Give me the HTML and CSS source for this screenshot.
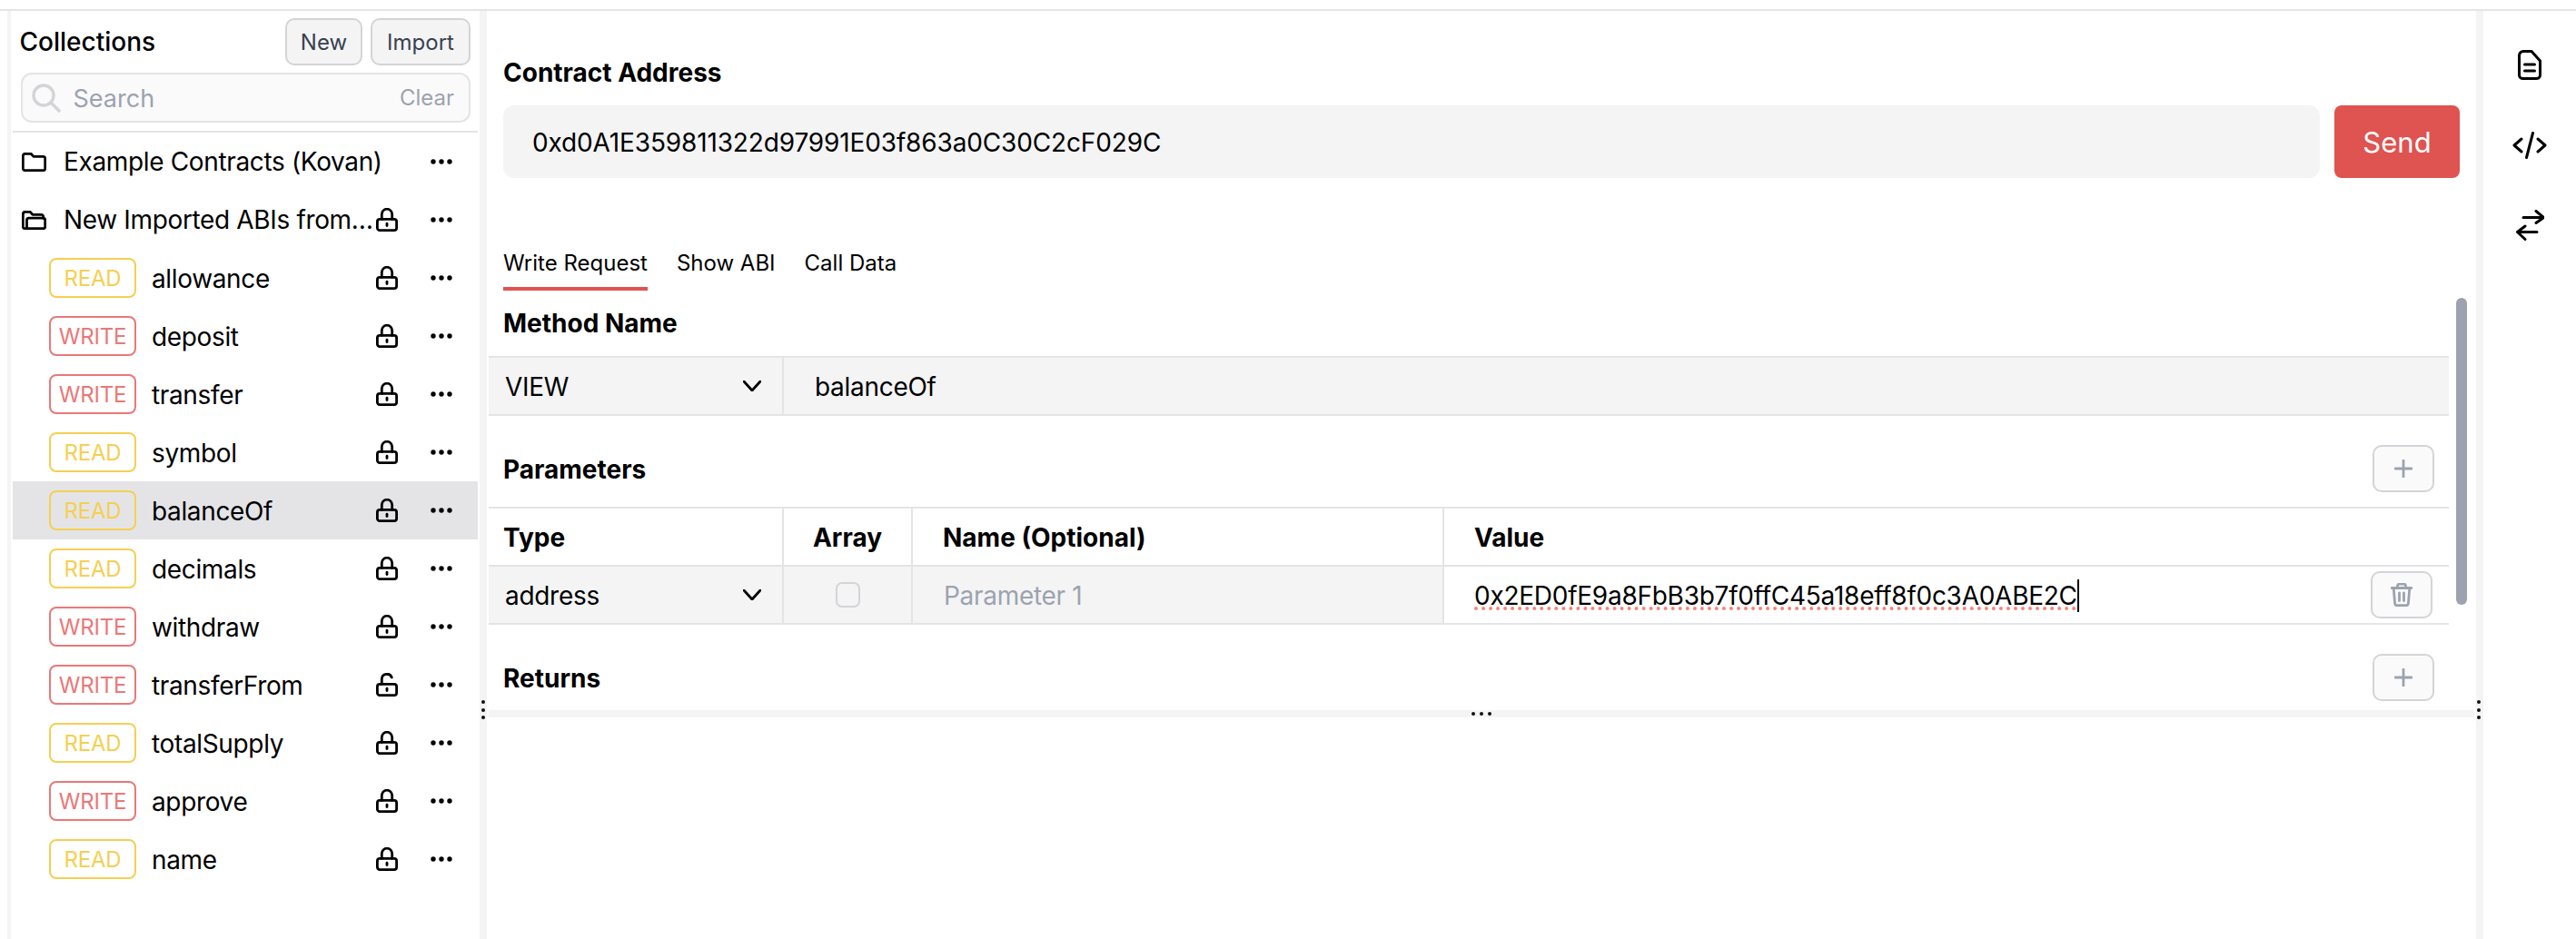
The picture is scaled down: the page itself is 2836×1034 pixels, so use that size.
FILE: index.html
```html
<!DOCTYPE html>
<html lang="en">
<head>
<meta charset="utf-8">
<title>Collections</title>
<link rel="stylesheet" href="styles.css">
</head>
<body>
<svg class="sprite" width="0" height="0" aria-hidden="true">
  <symbol id="lock" viewBox="0 0 24 26"><rect x="1.4" y="12.4" width="21.2" height="12.2" rx="2.6"/><path d="M6.3 12.4V6.9a5.700 5.700 0 0 1 11.400 0v5.500"/><path d="M12 17.200v2.400"/></symbol>
  <symbol id="unlock" viewBox="0 0 24 26"><rect x="1.4" y="12.4" width="21.2" height="12.2" rx="2.6"/><path d="M6.3 12.4V6.9a5.700 5.700 0 0 1 11 -2"/><path d="M12 17.200v2.400"/></symbol>
  <symbol id="more" viewBox="0 0 24 6"><circle class="solid" cx="3" cy="3" r="2.7"/><circle class="solid" cx="12" cy="3" r="2.7"/><circle class="solid" cx="21" cy="3" r="2.7"/></symbol>
  <symbol id="chev" viewBox="0 0 20 12"><path d="M1 1l9 10 9-10"/></symbol>
  <symbol id="plus" viewBox="0 0 20 20"><path d="M10 1v18M1 10h18"/></symbol>
</svg>
<div class="topline"></div>
<div class="shell">
  <div class="gutter-thin"></div>
  <aside class="sidebar">
    <div class="side-head">
      <h2 class="side-title">Collections</h2>
      <div class="side-actions">
        <button class="btn btn-new">New</button>
        <button class="btn btn-import">Import</button>
      </div>
    </div>
    <div class="search">
      <svg class="search-icon" viewBox="0 0 32 32"><circle cx="13" cy="13" r="11"/><path d="M21 21l9 9"/></svg>
      <span class="search-text">Search</span>
      <span class="search-clear">Clear</span>
    </div>
    <div class="tree">
      <div class="row">
        <svg class="folder" viewBox="0 0 27 21"><path d="M1.3 3.6a2.3 2.3 0 0 1 2.3-2.3h6.5l2.8 3h10.5a2.3 2.3 0 0 1 2.3 2.3v10.8a2.3 2.3 0 0 1-2.3 2.3H3.6a2.3 2.3 0 0 1-2.3-2.3z"/></svg>
        <span class="row-name">Example Contracts (Kovan)</span>
        <span class="lock-slot"></span>
        <svg class="more"><use href="#more"/></svg>
      </div>
      <div class="row">
        <svg class="folder" viewBox="0 0 27 21"><path d="M1.3 3.6a2.3 2.3 0 0 1 2.3-2.3h5.5l2.8 3h9.5a2.3 2.3 0 0 1 2.3 2.3v1.7"/><path d="M1.3 3.6v13.800a2.3 2.3 0 0 0 2.3 2.3h19.800a2.3 2.3 0 0 0 2.3-2.3v-7a2.3 2.3 0 0 0-2.3-2.3H7.800a2.3 2.3 0 0 0-2.3 2.3v9.300"/></svg>
        <span class="row-name row-name-cut">New Imported ABIs from Etherscan</span>
        <svg class="lock"><use href="#lock"/></svg>
        <svg class="more"><use href="#more"/></svg>
      </div>
      <div class="row row-method"><span class="badge read">READ</span><span class="method">allowance</span><svg class="lock"><use href="#lock"/></svg><svg class="more"><use href="#more"/></svg></div>
      <div class="row row-method"><span class="badge write">WRITE</span><span class="method">deposit</span><svg class="lock"><use href="#lock"/></svg><svg class="more"><use href="#more"/></svg></div>
      <div class="row row-method"><span class="badge write">WRITE</span><span class="method">transfer</span><svg class="lock"><use href="#lock"/></svg><svg class="more"><use href="#more"/></svg></div>
      <div class="row row-method"><span class="badge read">READ</span><span class="method">symbol</span><svg class="lock"><use href="#lock"/></svg><svg class="more"><use href="#more"/></svg></div>
      <div class="row row-method row-active"><span class="badge read">READ</span><span class="method">balanceOf</span><svg class="lock"><use href="#lock"/></svg><svg class="more"><use href="#more"/></svg></div>
      <div class="row row-method"><span class="badge read">READ</span><span class="method">decimals</span><svg class="lock"><use href="#lock"/></svg><svg class="more"><use href="#more"/></svg></div>
      <div class="row row-method"><span class="badge write">WRITE</span><span class="method">withdraw</span><svg class="lock"><use href="#lock"/></svg><svg class="more"><use href="#more"/></svg></div>
      <div class="row row-method"><span class="badge write">WRITE</span><span class="method">transferFrom</span><svg class="lock"><use href="#unlock"/></svg><svg class="more"><use href="#more"/></svg></div>
      <div class="row row-method"><span class="badge read">READ</span><span class="method">totalSupply</span><svg class="lock"><use href="#lock"/></svg><svg class="more"><use href="#more"/></svg></div>
      <div class="row row-method"><span class="badge write">WRITE</span><span class="method">approve</span><svg class="lock"><use href="#lock"/></svg><svg class="more"><use href="#more"/></svg></div>
      <div class="row row-method"><span class="badge read">READ</span><span class="method">name</span><svg class="lock"><use href="#lock"/></svg><svg class="more"><use href="#more"/></svg></div>
    </div>
  </aside>
  <div class="gutter">
    <span class="vdots"><i></i><i></i><i></i></span>
  </div>
  <main class="main">
    <div class="upper">
      <section class="contract">
        <label class="heading contract-label">Contract Address</label>
        <div class="contract-line">
          <div class="contract-input">0xd0A1E359811322d97991E03f863a0C30C2cF029C</div>
          <button class="send">Send</button>
        </div>
      </section>
      <nav class="tabs">
        <span class="tab tab-active">Write Request</span>
        <span class="tab">Show ABI</span>
        <span class="tab">Call Data</span>
      </nav>
      <h3 class="heading method-head">Method Name</h3>
      <div class="grid-row method-row tinted">
        <div class="cell cell-type">VIEW<svg class="chev"><use href="#chev"/></svg></div>
        <div class="cell cell-method">balanceOf</div>
      </div>
      <div class="section-head params-head">
        <h3 class="heading">Parameters</h3>
        <button class="icon-btn"><svg class="plus"><use href="#plus"/></svg></button>
      </div>
      <div class="grid-row header-row">
        <div class="cell cell-type heading">Type</div>
        <div class="cell cell-array heading">Array</div>
        <div class="cell cell-name heading">Name (Optional)</div>
        <div class="cell cell-value heading">Value</div>
      </div>
      <div class="grid-row data-row">
        <div class="cell cell-type tinted">address<svg class="chev"><use href="#chev"/></svg></div>
        <div class="cell cell-array tinted"><span class="checkbox"></span></div>
        <div class="cell cell-name tinted placeholder">Parameter 1</div>
        <div class="cell cell-value cell-input"><span class="value-text">0x2ED0fE9a8FbB3b7f0ffC45a18eff8f0c3A0ABE2C</span><span class="caret"></span>
          <button class="icon-btn trash-btn"><svg class="trash" viewBox="0 0 24 26"><path d="M1 5.500h22"/><path d="M7.500 5.500V3.200a2 2 0 0 1 2-2h5a2 2 0 0 1 2 2v2.300"/><path d="M3.200 5.500l1.400 17a2.400 2.400 0 0 0 2.400 2.200h10a2.400 2.400 0 0 0 2.400-2.200l1.400-17"/><path d="M9.500 11v8.500M14.500 11v8.500"/></svg></button>
        </div>
      </div>
      <div class="section-head returns-head">
        <h3 class="heading">Returns</h3>
        <button class="icon-btn"><svg class="plus"><use href="#plus"/></svg></button>
      </div>
      <div class="scrollbar"></div>
    </div>
    <div class="hbar"><span class="hdots"><i></i><i></i><i></i></span></div>
  </main>
  <div class="gutter">
    <span class="vdots vdots-right"><i></i><i></i><i></i></span>
  </div>
  <aside class="rail">
    <svg class="rail-file" viewBox="0 0 26 33"><path d="M6 1.500h9l9.500 10.500v15.500a4 4 0 0 1-4 4H5.500a4 4 0 0 1-4-4V6a4.500 4.500 0 0 1 4.500-4.500z"/><path d="M7.500 16h11M7.500 23h11"/></svg>
    <svg class="rail-code" viewBox="0 0 38 30"><path d="M10 8L2 15l8 7M28 8l8 7-8 7"/><path d="M22.500 1.500L15.500 28.500"/></svg>
    <svg class="rail-swap" viewBox="0 0 31 34"><path d="M8 8.500h22M22 1.500l8.500 7-8.500 6"/><path d="M23 24.500H2M10 18l-8.500 6.500 8.500 8"/></svg>
  </aside>
</div>
</body>
</html>
```
FILE: styles.css
```css
* { box-sizing: border-box; }
html, body { margin: 0; height: 100%; overflow: hidden; }
body {
  font-family: Inter, "Liberation Sans", sans-serif;
  font-size: 28px;
  color: #000;
  background: #fff;
  padding-top: 10px;
  display: flex;
  flex-direction: column;
}
.sprite { position: absolute; }
svg { fill: none; stroke: currentColor; stroke-width: 2.8; stroke-linecap: round; stroke-linejoin: round; flex: none; }
.solid { fill: currentColor; stroke: none; }
button { font-family: inherit; margin: 0; cursor: pointer; }
h2, h3 { margin: 0; }

.topline { height: 2px; background: #e4e4e7; flex: none; }
.shell { flex: 1; display: flex; padding-left: 8px; min-height: 0; }
.gutter-thin { width: 4px; background: #f4f4f5; flex: none; }
.gutter { width: 8px; background: #f4f4f5; flex: none; position: relative; }
.vdots { position: absolute; left: 2px; top: 759px; display: flex; flex-direction: column; gap: 4.500px; }
.vdots i, .hdots i { display: block; width: 4px; height: 4px; border-radius: 50%; background: #111; }
.vdots-right { left: 1px; }

.sidebar { width: 516px; flex: none; padding-top: 8px; }
.side-head { display: flex; align-items: center; justify-content: space-between; height: 52px; padding: 0 10px 0 9.500px; }
.side-title { font-size: 28px; font-weight: 500; line-height: 34px; }
.side-actions { display: flex; gap: 9px; }
.btn { height: 52px; border: 2px solid #d4d4d8; border-radius: 10px; background: #f4f4f5; color: #374151; font-size: 24px; padding: 0; }
.btn-new { width: 85px; }
.btn-import { width: 110px; }
.search { margin: 8px 10px 0 10.500px; height: 55px; border: 2px solid #e4e4e7; border-radius: 12px; background: #fafafa; display: flex; align-items: center; padding: 0 16px 0 10px; }
.search-icon { width: 32px; height: 32px; color: #d4d4d8; stroke-width: 3.400; }
.search-text { margin-left: 14px; color: #9ca3af; font-size: 27px; flex: 1; padding-top: 2px; }
.search-clear { color: #9ca3af; font-size: 24px; }
.tree { margin: 9px 2px 0; border-top: 2px solid #e4e4e7; }
.row { height: 64px; display: flex; align-items: center; padding: 0 28px 0 10px; letter-spacing: -0.35px; }
.row-method { padding-left: 40px; }
.row-active { background: #e4e4e7; }
.folder { width: 27px; height: 21px; }
.row-name { margin-left: 19px; flex: 1; min-width: 0; white-space: nowrap; }
.row-name-cut { overflow: hidden; text-overflow: ellipsis; margin-right: 2px; }
.lock-slot { width: 24px; }
.lock { width: 24px; height: 26px; }
.more { width: 24px; height: 6px; margin-left: 36px; }
.badge { width: 96px; height: 44px; border: 2px solid; border-radius: 8px; display: flex; align-items: center; justify-content: center; font-size: 24px; letter-spacing: -0.2px; flex: none; }
.read { color: #f5cf52; border-color: #f5cf52; }
.write { color: #ea7878; border-color: #ea7878; }
.method { margin-left: 17px; flex: 1; padding-top: 2px; }

.main { width: 2190px; flex: none; display: flex; flex-direction: column; padding-left: 2px; }
.upper { height: 770px; flex: none; position: relative; overflow: hidden; }
.heading { font-size: 28px; font-weight: 700; line-height: 34px; letter-spacing: 0; }
.contract { padding: 51px 18px 0 16px; }
.contract-label { display: block; }
.contract-line { display: flex; gap: 16px; margin-top: 19px; }
.contract-input { flex: 1; height: 80px; background: #f4f4f5; border-radius: 12px; padding: 2px 0 0 32px; display: flex; align-items: center; font-size: 28px; letter-spacing: -0.14px; }
.send { width: 138px; height: 80px; border: 0; border-radius: 8px; background: #df5350; color: #fff; font-size: 31px; padding: 0; }
.tabs { display: flex; gap: 32px; margin: 77px 0 0 16px; }
.tab { font-size: 24px; line-height: 30px; padding: 2px 0 11px; border-bottom: 4px solid transparent; }
.tab-active { border-bottom-color: #df5350; }
.method-head { margin: 19px 0 0 16px; }

.grid-row { display: flex; width: 2158px; border-top: 2px solid #e4e4e7; border-bottom: 2px solid #e4e4e7; height: 66px; letter-spacing: -0.3px; }
.tinted { background: #f4f4f5; }
.method-row { margin-top: 19px; }
.cell { display: flex; align-items: center; flex: none; position: relative; font-size: 28px; }
.cell-type { width: 325px; padding: 2px 0 0 18px; border-right: 2px solid #e4e4e7; }
.header-row .cell-type { padding-left: 16px; }
.cell-method { padding: 2px 0 0 34px; flex: 1; }
.cell-array { width: 142px; justify-content: center; border-right: 2px solid #e4e4e7; }
.header-row .cell-array { padding-top: 2px; }
.cell-name { width: 585px; padding: 2px 0 0 34px; border-right: 2px solid #e4e4e7; }
.header-row .cell-name { padding-left: 33px; }
.cell-value { flex: 1; padding: 2px 0 0 33px; }
.placeholder { color: #9ca3af; }
.chev { width: 20px; height: 12px; position: absolute; left: 280px; top: 50%; margin-top: -6px; }
.checkbox { width: 27px; height: 28px; border: 2px solid #d4d4d8; border-radius: 7px; background: #f4f4f5; }
.section-head { display: flex; align-items: center; justify-content: space-between; padding: 0 16px 0 16px; width: 2158px; }
.section-head .heading { padding-top: 1px; }
.params-head { margin-top: 32px; margin-bottom: 16px; }
.returns-head { margin-top: 32px; }
.icon-btn { width: 68px; height: 52px; border: 2px solid #d4d4d8; border-radius: 10px; background: #fafafa; display: flex; align-items: center; justify-content: center; padding: 0; color: #9ca3af; }
.plus { width: 20px; height: 20px; }
.data-row { border-top: 0; height: 64px; }
.cell-input { letter-spacing: -0.26px; }
.value-text { text-decoration: underline dotted #f8837a; text-decoration-thickness: 3.500px; text-underline-offset: 2px; }
.caret { width: 2px; height: 36px; background: #000; }
.trash-btn { position: absolute; right: 18px; top: 5px; }
.trash { width: 24px; height: 26px; }
.scrollbar { position: absolute; left: 2166px; top: 316px; width: 12px; height: 338px; border-radius: 6px; background: #9ca3af; }
.hbar { height: 8px; width: 2186px; background: #f4f4f5; flex: none; display: flex; align-items: center; justify-content: center; }
.hdots { display: flex; gap: 5px; }

.rail { flex: 1; display: flex; flex-direction: column; align-items: center; padding-top: 43px; }
.rail svg { stroke-width: 3; }
.rail-file { width: 26px; height: 33px; }
.rail-code { width: 38px; height: 30px; margin-top: 57px; }
.rail-swap { width: 31px; height: 34px; margin-top: 56px; }
```
